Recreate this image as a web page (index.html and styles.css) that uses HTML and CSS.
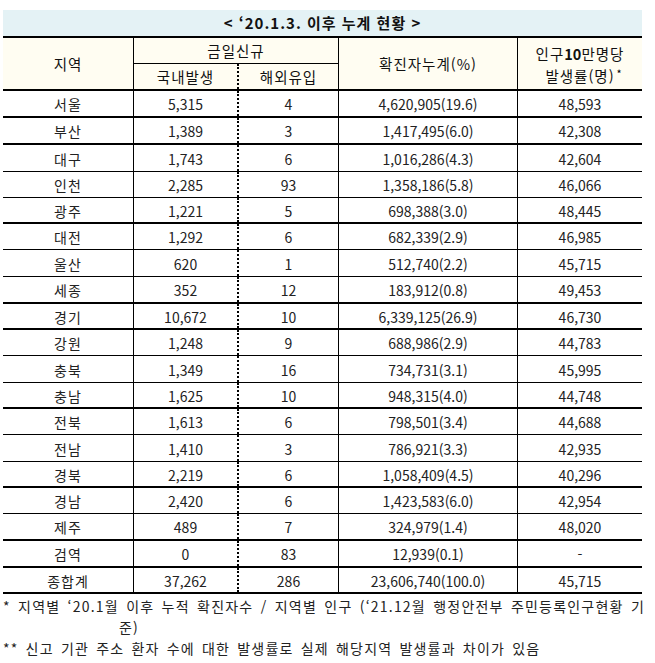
FILE: index.html
```html
<!DOCTYPE html>
<html lang="ko">
<head>
<meta charset="utf-8">
<link rel="stylesheet" href="styles.css">
</head>
<body>
<div class="wrap">
  <div class="title">&lt; ‘20.1.3. 이후 누계 현황 &gt;</div>
  <div class="head">
    <div class="hc c1 span2">지역</div>
    <div class="hc c2 group">금일신규</div>
    <div class="hc c4 span2 vl">확진자누계(%)</div>
    <div class="hc c5 span2 vl two">
      <span class="l1">인구<b>10</b>만명당</span>
      <span class="l2">발생률(명)<span class="star">*</span></span>
    </div>
    <div class="hc c2b vl">국내발생</div>
    <div class="hc c3b dl">해외유입</div>
  </div>
  <div class="row h27 thick"><div class="k">서울</div><div class="vl">5,315</div><div class="dl">4</div><div class="vl">4,620,905(19.6)</div><div class="vl">48,593</div></div>
  <div class="row h27 thick"><div class="k">부산</div><div class="vl">1,389</div><div class="dl">3</div><div class="vl">1,417,495(6.0)</div><div class="vl">42,308</div></div>
  <div class="row h27"><div class="k">대구</div><div class="vl">1,743</div><div class="dl">6</div><div class="vl">1,016,286(4.3)</div><div class="vl">42,604</div></div>
  <div class="row h26"><div class="k">인천</div><div class="vl">2,285</div><div class="dl">93</div><div class="vl">1,358,186(5.8)</div><div class="vl">46,066</div></div>
  <div class="row h26 thick"><div class="k">광주</div><div class="vl">1,221</div><div class="dl">5</div><div class="vl">698,388(3.0)</div><div class="vl">48,445</div></div>
  <div class="row h26"><div class="k">대전</div><div class="vl">1,292</div><div class="dl">6</div><div class="vl">682,339(2.9)</div><div class="vl">46,985</div></div>
  <div class="row h27"><div class="k">울산</div><div class="vl">620</div><div class="dl">1</div><div class="vl">512,740(2.2)</div><div class="vl">45,715</div></div>
  <div class="row h27 thick"><div class="k">세종</div><div class="vl">352</div><div class="dl">12</div><div class="vl">183,912(0.8)</div><div class="vl">49,453</div></div>
  <div class="row h26 thick"><div class="k">경기</div><div class="vl">10,672</div><div class="dl">10</div><div class="vl">6,339,125(26.9)</div><div class="vl">46,730</div></div>
  <div class="row h26"><div class="k">강원</div><div class="vl">1,248</div><div class="dl">9</div><div class="vl">688,986(2.9)</div><div class="vl">44,783</div></div>
  <div class="row h27"><div class="k">충북</div><div class="vl">1,349</div><div class="dl">16</div><div class="vl">734,731(3.1)</div><div class="vl">45,995</div></div>
  <div class="row h26 thick"><div class="k">충남</div><div class="vl">1,625</div><div class="dl">10</div><div class="vl">948,315(4.0)</div><div class="vl">44,748</div></div>
  <div class="row h26"><div class="k">전북</div><div class="vl">1,613</div><div class="dl">6</div><div class="vl">798,501(3.4)</div><div class="vl">44,688</div></div>
  <div class="row h27"><div class="k">전남</div><div class="vl">1,410</div><div class="dl">3</div><div class="vl">786,921(3.3)</div><div class="vl">42,935</div></div>
  <div class="row h26 thick"><div class="k">경북</div><div class="vl">2,219</div><div class="dl">6</div><div class="vl">1,058,409(4.5)</div><div class="vl">40,296</div></div>
  <div class="row h26"><div class="k">경남</div><div class="vl">2,420</div><div class="dl">6</div><div class="vl">1,423,583(6.0)</div><div class="vl">42,954</div></div>
  <div class="row h27 thick"><div class="k">제주</div><div class="vl">489</div><div class="dl">7</div><div class="vl">324,979(1.4)</div><div class="vl">48,020</div></div>
  <div class="row h27 thick"><div class="k">검역</div><div class="vl">0</div><div class="dl">83</div><div class="vl">12,939(0.1)</div><div class="vl">-</div></div>
  <div class="row h26 thick"><div class="k">종합계</div><div class="vl">37,262</div><div class="dl">286</div><div class="vl">23,606,740(100.0)</div><div class="vl">45,715</div></div>
  <div class="notes">
    <p class="n1">* 지역별 ‘20.1월 이후 누적 확진자수 / 지역별 인구 (‘21.12월 행정안전부 주민등록인구현황 기</p>
    <p class="n2">준)</p>
    <p class="n3">** 신고 기관 주소 환자 수에 대한 발생률로 실제 해당지역 발생률과 차이가 있음</p>
  </div>
</div>
</body>
</html>
```

FILE: styles.css
```css
* { box-sizing: border-box; }
html, body { margin: 0; padding: 0; background: #fff; }
body {
  font-family: "Noto Sans CJK KR", "Noto Sans", sans-serif;
  font-size: 14px;
  color: #222;
}
.wrap {
  width: 639px;
  margin: 10px 0 0 3px;
}
.title {
  height: 26px;
  background: #e4f2f5;
  text-align: center;
  font-weight: bold;
  color: #111;
  line-height: 26px;
  font-size: 15px;
  letter-spacing: 1px;
}
.head {
  display: grid;
  grid-template-columns: 130px 104px 101px 179px 125px;
  grid-template-rows: 26px 25px;
  background: #fffdf2;
  border-top: 2px solid #000;
  border-bottom: 2px solid #000;
  color: #111;
}
.hc {
  display: flex;
  align-items: center;
  justify-content: center;
  text-align: center;
  font-size: 14.5px;
  letter-spacing: 1px;
}
.c1 { grid-column: 1; grid-row: 1 / 3; }
.c2 { grid-column: 2 / 4; grid-row: 1; border-left: 1px solid #000; border-bottom: 1px solid #000; }
.c4 { grid-column: 4; grid-row: 1 / 3; }
.c5 { grid-column: 5; grid-row: 1 / 3; }
.c2b { grid-column: 2; grid-row: 2; }
.c3b { grid-column: 3; grid-row: 2; }
.two { flex-direction: column; padding-top: 2px; }
.two .l1, .two .l2 { line-height: 22px; height: 22px; }
.two b { font-weight: bold; letter-spacing: 0; }
.l2 { position: relative; }
.star {
  position: absolute;
  right: -7px;
  top: 4px;
  font-size: 11px;
  line-height: 9px;
  letter-spacing: 0;
  color: #000;
}
.vl { border-left: 1px solid #000; }
.dl { border-left: 2px dotted #000; }
.row {
  display: grid;
  grid-template-columns: 130px 104px 101px 179px 125px;
  border-bottom: 1px solid #000;
}
.row.thick { border-bottom-width: 2px; }
.h26 { height: 26px; }
.h27 { height: 27px; }
.row > div {
  display: flex;
  align-items: center;
  justify-content: center;
  padding-top: 1px;
}
.row > .k { letter-spacing: 1px; }
.notes { width: 642px; color: #222; font-size: 14px; letter-spacing: 1.2px; }
.notes p { margin: 0; line-height: 21px; }
.n1 { text-align: justify; text-align-last: justify; padding-top: 2px; white-space: nowrap; }
.n2 { padding-left: 116px; }
.n3 { word-spacing: 2px; }
```
